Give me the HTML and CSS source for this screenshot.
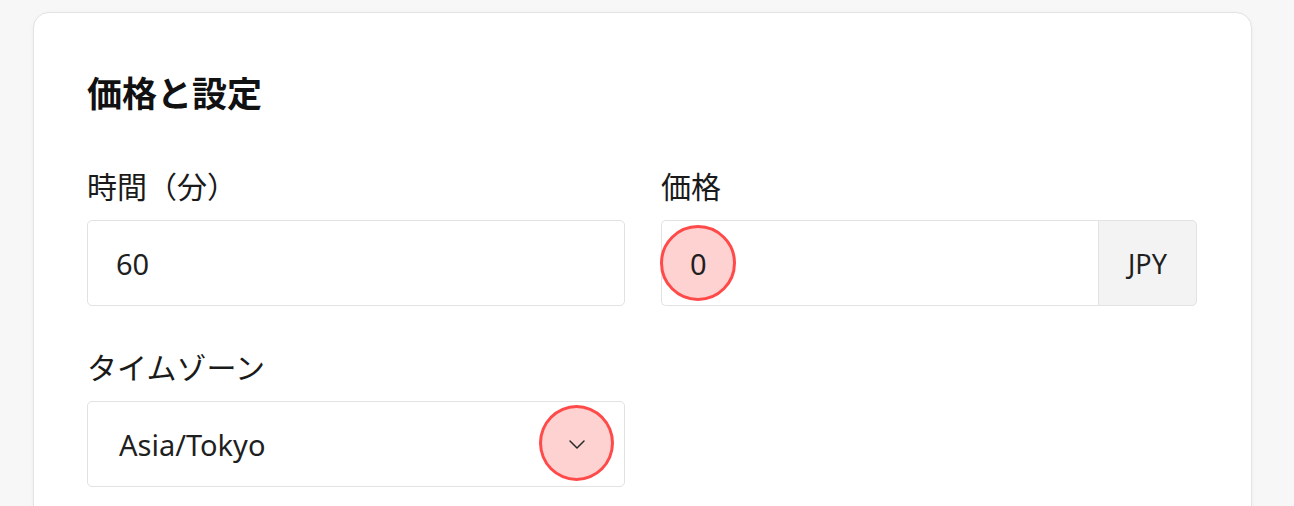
FILE: index.html
```html
<!DOCTYPE html>
<html lang="ja">
<head>
  <meta charset="UTF-8">
  <meta name="viewport" content="width=device-width, initial-scale=1.0">
  <title>価格と設定</title>
  <link rel="stylesheet" href="styles.css">
</head>
<body>
  <div class="card">
    <h2 class="card-title">価格と設定</h2>
    <div class="form-grid">
      <div class="field">
        <label class="field-label">時間（分）</label>
        <div class="input-box">
          <span class="input-value">60</span>
        </div>
      </div>
      <div class="field">
        <label class="field-label">価格</label>
        <div class="input-group">
          <div class="input-box group-main">
            <span class="input-value">0</span>
            <span class="marker marker-price"></span>
          </div>
          <div class="addon">JPY</div>
        </div>
      </div>
      <div class="field">
        <label class="field-label">タイムゾーン</label>
        <div class="input-box select-box">
          <span class="input-value">Asia/Tokyo</span>
          <span class="marker marker-select"></span>
          <svg class="chevron" width="18" height="11" viewBox="0 0 18 11">
            <path d="M2 2 L9 9 L16 2" fill="none" stroke="#2a2a2a" stroke-width="1.5" stroke-linecap="round" stroke-linejoin="round"/>
          </svg>
        </div>
      </div>
    </div>
  </div>
</body>
</html>
```

FILE: styles.css
```css
* {
  margin: 0;
  padding: 0;
  box-sizing: border-box;
}
body {
  background: #f7f7f7;
  font-family: 'Noto Sans', 'Noto Sans CJK JP', sans-serif;
  color: #1c1c1c;
  padding: 12px 42px 0 33px;
  height: 506px;
  overflow: hidden;
}
.card {
  background: #ffffff;
  border: 1px solid #e3e3e3;
  border-radius: 16px;
  box-shadow: 0 1px 4px rgba(0, 0, 0, 0.04);
  padding: 56px 54px 60px 53px;
  min-height: 560px;
}
.card-title {
  font-family: 'Noto Sans CJK JP', sans-serif;
  font-size: 35px;
  font-weight: 700;
  line-height: 46px;
  color: #111;
  margin-bottom: 50px;
}
.form-grid {
  display: grid;
  grid-template-columns: 538px 536px;
  column-gap: 36px;
  row-gap: 40px;
}
.field-label {
  display: block;
  font-family: 'Noto Sans CJK JP', sans-serif;
  font-size: 30px;
  line-height: 40px;
  color: #1a1a1a;
  margin-bottom: 15px;
}
.input-box {
  position: relative;
  display: flex;
  align-items: center;
  height: 86px;
  border: 1px solid #e2e2e2;
  border-radius: 5px;
  padding-left: 28px;
  background: #fff;
}
.input-value {
  font-size: 29px;
  color: #1f1f1f;
  position: relative;
  z-index: 2;
}
.input-group {
  display: flex;
  height: 86px;
}
.group-main {
  flex: 1;
  border-radius: 5px 0 0 5px;
  border-right: none;
}
.addon {
  width: 99px;
  display: flex;
  align-items: center;
  justify-content: center;
  background: #f3f3f3;
  border: 1px solid #e2e2e2;
  border-radius: 0 5px 5px 0;
  font-size: 27px;
  color: #1f1f1f;
}
.select-box {
  padding-left: 31px;
}
.chevron {
  position: absolute;
  right: 38px;
  top: 37px;
  z-index: 2;
}
.marker {
  position: absolute;
  width: 76px;
  height: 76px;
  border-radius: 50%;
  background: #ffd2d2;
  border: 3px solid #ff4a4a;
  z-index: 1;
}
.marker-price {
  left: -2px;
  top: 4px;
}
.marker-select {
  right: 10px;
  top: 3px;
  width: 75px;
}
```
